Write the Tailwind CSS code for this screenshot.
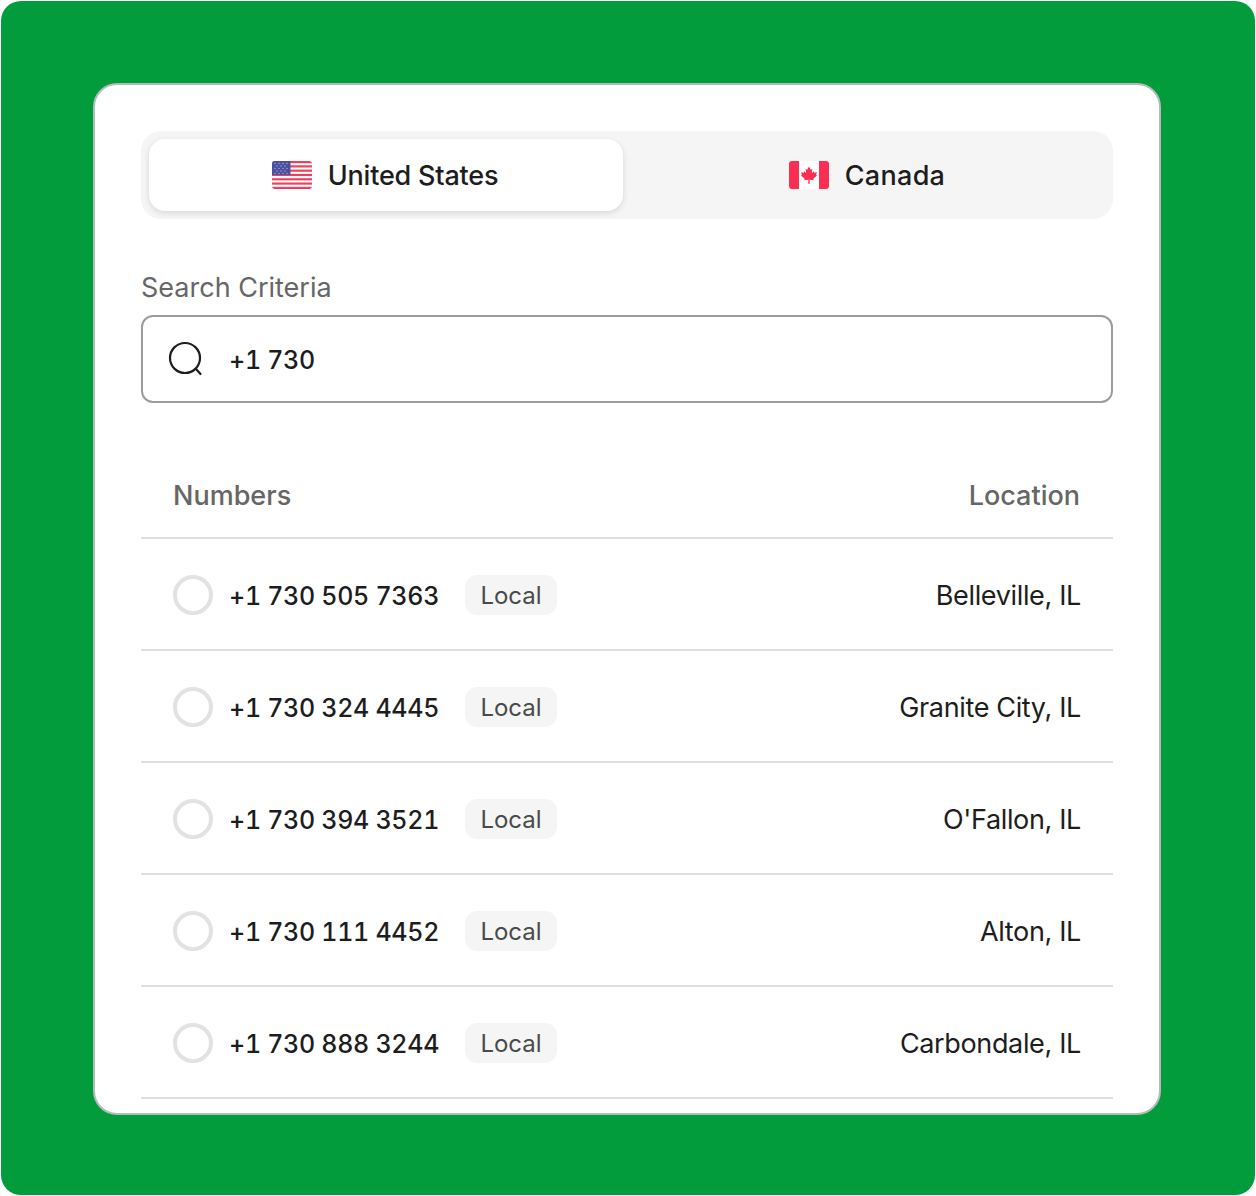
<!DOCTYPE html>
<html lang="en">
<head>
    <meta charset="UTF-8">
    <meta name="viewport" content="width=device-width, initial-scale=1.0">
    <title>Numbers</title>
    <script src="https://cdn.jsdelivr.net/npm/@tailwindcss/browser@4"></script>
</head>
<body class="bg-white font-['Inter',sans-serif]">
    <div class="w-[1256px] h-[1196px] p-px">
        <div class="h-[1194px] bg-[#029c3c] rounded-[20px] pt-[82px] pl-[92px] pr-[94px]">
            <div class="h-[1032px] bg-white border-2 border-[#b4bcb6] rounded-[24px] px-[46px] pt-[46px] overflow-hidden">
                <!-- Country tabs -->
                <div class="h-[88px] bg-[#f5f5f5] rounded-[20px] p-2 grid grid-cols-[474px_1fr]">
                    <div class="pr-[2px] bg-white rounded-2xl shadow-[0_2px_6px_rgba(0,0,0,0.12)] flex items-center justify-center gap-4">
                        <svg class="w-[40px] h-[28px]" viewBox="0 0 40 28">
                            <defs><clipPath id="usClip"><rect width="40" height="28" rx="3"/></clipPath></defs>
                            <g clip-path="url(#usClip)">
                                <rect width="40" height="28" fill="#fff"/>
                                <rect y="0" width="40" height="2.15" fill="#ef3f5c"/>
                                <rect y="4.3" width="40" height="2.15" fill="#ef3f5c"/>
                                <rect y="8.6" width="40" height="2.15" fill="#ef3f5c"/>
                                <rect y="12.9" width="40" height="2.15" fill="#ef3f5c"/>
                                <rect y="17.2" width="40" height="2.15" fill="#ef3f5c"/>
                                <rect y="21.5" width="40" height="2.15" fill="#ef3f5c"/>
                                <rect y="25.85" width="40" height="2.15" fill="#ef3f5c"/>
                                <rect width="18.5" height="14" fill="#4a4f9f"/>
                                <g fill="#9a9dd0">
                                    <circle cx="3" cy="2.5" r=".8"/><circle cx="7" cy="2.5" r=".8"/><circle cx="11" cy="2.5" r=".8"/><circle cx="15" cy="2.5" r=".8"/>
                                    <circle cx="5" cy="5" r=".8"/><circle cx="9" cy="5" r=".8"/><circle cx="13" cy="5" r=".8"/>
                                    <circle cx="3" cy="7.5" r=".8"/><circle cx="7" cy="7.5" r=".8"/><circle cx="11" cy="7.5" r=".8"/><circle cx="15" cy="7.5" r=".8"/>
                                    <circle cx="5" cy="10" r=".8"/><circle cx="9" cy="10" r=".8"/><circle cx="13" cy="10" r=".8"/>
                                    <circle cx="3" cy="12.5" r=".8"/><circle cx="7" cy="12.5" r=".8"/><circle cx="11" cy="12.5" r=".8"/><circle cx="15" cy="12.5" r=".8"/>
                                </g>
                            </g>
                        </svg>
                        <span class="pt-[2px] text-[27px] font-medium text-[#1d1d1d] tracking-[-0.2px]">United States</span>
                    </div>
                    <div class="pl-[6px] flex items-center justify-center gap-4">
                        <svg class="w-[40px] h-[28px]" viewBox="0 0 40 28">
                            <defs><clipPath id="caClip"><rect width="40" height="28" rx="3"/></clipPath></defs>
                            <g clip-path="url(#caClip)">
                                <rect width="40" height="28" fill="#fff"/>
                                <rect width="10" height="28" fill="#fb2e52"/>
                                <rect x="30" width="10" height="28" fill="#fb2e52"/>
                            </g>
                            <path fill="#fb2e52" d="M20 5.5l1.8 3.2 1.6-.8-.7 4.3 2-2 .6 1.5 2.6-.4-.8 2.6 1 .6-3.8 3.2.5 1.6-4.2-.6.2 4h-1.6l.2-4-4.2.6.5-1.6-3.8-3.2 1-.6-.8-2.6 2.6.4.6-1.5 2 2-.7-4.3 1.6.8z"/>
                        </svg>
                        <span class="pt-[2px] text-[27px] font-medium text-[#1d1d1d] tracking-[0.3px]">Canada</span>
                    </div>
                </div>

                <!-- Search -->
                <label class="block mt-[52px] text-[27px] leading-[34px] text-[#666666]">Search Criteria</label>
                <div class="mt-[10px] h-[88px] border-2 border-[#9c9c9c] rounded-xl flex items-center pl-[25px] gap-[25px]">
                    <svg class="w-[36px] h-[36px]" viewBox="0 0 36 36" fill="none" stroke="#1d1d1d" stroke-width="2.2" stroke-linecap="round">
                        <circle cx="17" cy="17" r="15"/>
                        <path d="M28 28l4.5 5"/>
                    </svg>
                    <span class="pt-1 text-[25px] font-medium text-[#1d1d1d] tabular-nums tracking-[-0.3px]">+1 730</span>
                </div>

                <!-- Table header -->
                <div class="mt-[46px] h-[90px] border-b-2 border-[#e0e0e0] pl-8 pr-[33px] pt-[6px] flex items-center justify-between text-[27px] font-[450] text-[#666666]">
                    <span>Numbers</span>
                    <span>Location</span>
                </div>

                <!-- Rows -->
                <div class="h-[112px] border-b-2 border-[#e0e0e0] px-8 pt-[2px] flex items-center">
                    <span class="w-10 h-10 rounded-full border-4 border-[#e2e2e2]"></span>
                    <span class="ml-4 w-[236px] pt-1 text-[25px] font-medium text-[#1d1d1d] tabular-nums tracking-[-0.3px]">+1 730 505 7363</span>
                    <span class="pt-px h-10 w-[92px] bg-[#f5f5f5] rounded-xl flex items-center justify-center text-[24px] text-[#4a4a4a]">Local</span>
                    <span class="ml-auto pt-[2px] text-[27px] text-[#1d1d1d] tracking-[-0.35px]">Belleville, IL</span>
                </div>
                <div class="h-[112px] border-b-2 border-[#e0e0e0] px-8 pt-[2px] flex items-center">
                    <span class="w-10 h-10 rounded-full border-4 border-[#e2e2e2]"></span>
                    <span class="ml-4 w-[236px] pt-1 text-[25px] font-medium text-[#1d1d1d] tabular-nums tracking-[-0.3px]">+1 730 324 4445</span>
                    <span class="pt-px h-10 w-[92px] bg-[#f5f5f5] rounded-xl flex items-center justify-center text-[24px] text-[#4a4a4a]">Local</span>
                    <span class="ml-auto pt-[2px] text-[27px] text-[#1d1d1d] tracking-[-0.35px]">Granite City, IL</span>
                </div>
                <div class="h-[112px] border-b-2 border-[#e0e0e0] px-8 pt-[2px] flex items-center">
                    <span class="w-10 h-10 rounded-full border-4 border-[#e2e2e2]"></span>
                    <span class="ml-4 w-[236px] pt-1 text-[25px] font-medium text-[#1d1d1d] tabular-nums tracking-[-0.3px]">+1 730 394 3521</span>
                    <span class="pt-px h-10 w-[92px] bg-[#f5f5f5] rounded-xl flex items-center justify-center text-[24px] text-[#4a4a4a]">Local</span>
                    <span class="ml-auto pt-[2px] text-[27px] text-[#1d1d1d] tracking-[-0.35px]">O'Fallon, IL</span>
                </div>
                <div class="h-[112px] border-b-2 border-[#e0e0e0] px-8 pt-[2px] flex items-center">
                    <span class="w-10 h-10 rounded-full border-4 border-[#e2e2e2]"></span>
                    <span class="ml-4 w-[236px] pt-1 text-[25px] font-medium text-[#1d1d1d] tabular-nums tracking-[-0.3px]">+1 730 111 4452</span>
                    <span class="pt-px h-10 w-[92px] bg-[#f5f5f5] rounded-xl flex items-center justify-center text-[24px] text-[#4a4a4a]">Local</span>
                    <span class="ml-auto pt-[2px] text-[27px] text-[#1d1d1d] tracking-[-0.35px]">Alton, IL</span>
                </div>
                <div class="h-[112px] border-b-2 border-[#e0e0e0] px-8 pt-[2px] flex items-center">
                    <span class="w-10 h-10 rounded-full border-4 border-[#e2e2e2]"></span>
                    <span class="ml-4 w-[236px] pt-1 text-[25px] font-medium text-[#1d1d1d] tabular-nums tracking-[-0.3px]">+1 730 888 3244</span>
                    <span class="pt-px h-10 w-[92px] bg-[#f5f5f5] rounded-xl flex items-center justify-center text-[24px] text-[#4a4a4a]">Local</span>
                    <span class="ml-auto pt-[2px] text-[27px] text-[#1d1d1d] tracking-[-0.35px]">Carbondale, IL</span>
                </div>
            </div>
        </div>
    </div>
</body>
</html>
